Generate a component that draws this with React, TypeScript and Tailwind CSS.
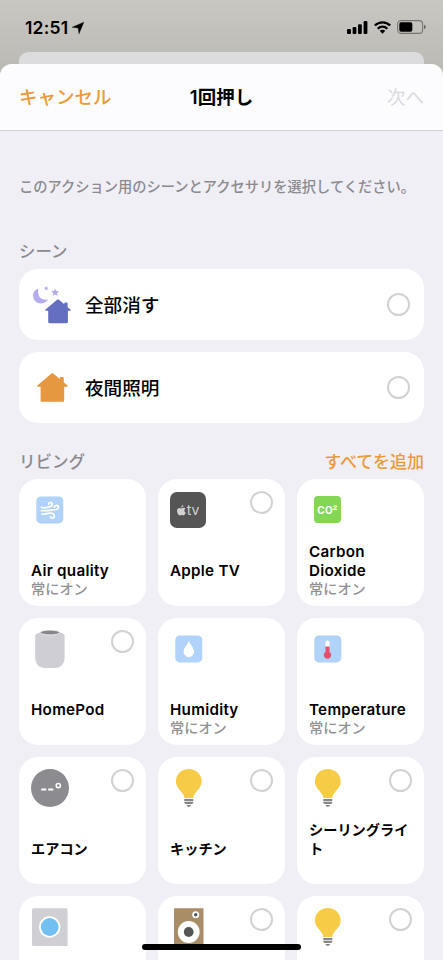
import type { ReactNode } from "react";

interface SceneType {
  name: string;
  icon: ReactNode;
}

interface AccessoryType {
  id: number;
  name: string;
  icon: ReactNode;
  status?: string;
  selectable?: boolean;
  latin?: boolean;
}

const HOUSE_PATH =
  "M14.2.7c.7-.6 1.6-.6 2.3 0l6.4 5.3V4.8c0-.5.4-.8.9-.8h2.1c.5 0 .9.3.9.8v4.7l3.6 2.9c.6.6.4 1.3-.4 1.3h-2.800v13.700c0 .9-.6 1.4-1.4 1.4H5c-.8 0-1.4-.5-1.4-1.4V13.7H.8c-.8 0-1-.7-.4-1.3z";

function NightIcon() {
  return (
    <svg width="40" height="38" viewBox="0 0 40 38" className="block">
      <path
        d="M6.3 2.6C5.1 8.6 8.1 15.1 16.2 13.4C13 18.2 6.3 18.7 2.9 14.7C-.6 10.5.9 4.5 6.3 2.6z"
        fill="#b3adf0"
      />
      <path
        d="M14.2.1l.7 1.4 1.5.2-1.1 1.1.3 1.5-1.4-.7-1.4.7.3-1.5L12 1.7l1.5-.2z"
        fill="#b3adf0"
      />
      <path
        d="M23.1 2.4l1.1 2.7 2.9.2-2.2 1.9.7 2.8-2.5-1.5-2.5 1.5.7-2.8-2.2-1.9 2.9-.2z"
        fill="#b3adf0"
      />
      <path d={HOUSE_PATH} fill="#656fc2" transform="translate(13.2 13.2) scale(.835)" />
    </svg>
  );
}

function HouseIcon() {
  return (
    <svg width="31" height="29" viewBox="0 0 31 29" className="block">
      <path d={HOUSE_PATH} fill="#e69840" />
    </svg>
  );
}

function AirIcon() {
  return (
    <svg width="38" height="38" viewBox="0 0 38 38">
      <rect x="5.3" y="5.4" width="27" height="27" rx="4.5" fill="#b1d2f9" />
      <g fill="none" stroke="#fff" strokeWidth="1.7" strokeLinecap="round">
        <path d="M10.3 16.2c3 1.4 5.500.4 7.500-.2 2.700-.7 3.600-1.400 3.600-2.700 0-2.400-3.500-2.300-3.700-.2" />
        <path d="M10.3 19.500c4.500.8 7.500-.4 11-.6 3.500-.1 6.100-.3 6.100-2.500 0-2.600-3.700-2.500-4.100-.3" />
        <path d="M11 22.900c3.500.6 5.500-.9 8.200-.7 3.200.1 4.100 1.300 4.100 2.900 0 2.800-3.700 2.700-4 .5" />
      </g>
    </svg>
  );
}

function AppleTvIcon() {
  return (
    <div className="mt-px flex h-[36px] w-[36px] items-center justify-center gap-px rounded-[7px] bg-[#555555] text-[#d2d2d2]">
      <svg width="9" height="11" viewBox="0 0 18 22" fill="currentColor">
        <path d="M12.6 0c.2 2.3-1.7 4.8-4 4.9C8.3 2.7 10.4.3 12.6 0z" />
        <path d="M16.7 7.6c-3.1 1.9-2.6 6.3.8 7.6-.8 2.3-2.7 5.8-4.7 5.8-1.3 0-1.8-.8-3.4-.8s-2.2.8-3.4.8C3 21 0 15.8 0 11.7c0-3.8 2.5-5.9 5-5.9 1.7 0 3 1.1 4 1.1s2.6-1.2 4.5-1.2c.7 0 2.2.3 3.2 1.9z" />
      </svg>
      <span className="text-[14px] leading-none">tv</span>
    </div>
  );
}

function Co2Icon() {
  return (
    <div className="ml-[5px] mt-[5px] flex h-[27px] w-[27px] items-center justify-center rounded-[4px] bg-[#83d754] text-[10px] font-bold leading-none tracking-[0.2px] text-white">
      CO²
    </div>
  );
}

function HomePodIcon() {
  return (
    <svg width="38" height="38" viewBox="0 0 38 38">
      <path
        d="M4.2 6c0-2.8 5-4.6 14.8-4.6S33.6 3.2 33.6 6v21.5c0 7-5 10.5-9.6 10.5H13.5c-4.800 0-9.300-3.500-9.300-10.500z"
        fill="#cfced4"
      />
      <ellipse cx="19" cy="2.5" rx="9.7" ry="2.4" fill="#87878b" stroke="#fff" strokeWidth=".7" />
    </svg>
  );
}

function HumidityIcon() {
  return (
    <svg width="38" height="38" viewBox="0 0 38 38">
      <rect x="5.3" y="5.4" width="27" height="27" rx="4.5" fill="#b1d2f9" />
      <path d="M18.8 11c1 2.9 5.2 6.8 5.2 10.7a5.2 5.2 0 0 1-10.4 0c0-3.9 4.2-7.8 5.2-10.7z" fill="#fff" />
    </svg>
  );
}

function TemperatureIcon() {
  return (
    <svg width="38" height="38" viewBox="0 0 38 38">
      <rect x="5.3" y="5.4" width="27" height="27" rx="4.5" fill="#b1d2f9" />
      <path d="M16.5 17v-4.6a2 2 0 0 1 4 0V17z" fill="#fff" />
      <path d="M16.5 16.5h4v5.4a3.7 3.7 0 1 1-4 0z" fill="#e4506b" />
    </svg>
  );
}

function ThermostatIcon() {
  return (
    <svg width="38" height="38" viewBox="0 0 38 38">
      <circle cx="19" cy="19" r="19" fill="#8b8b90" />
      <path d="M10.2 20.4h5.1M17.2 20.4h5.1" stroke="#fff" strokeWidth="2" />
      <circle cx="27.3" cy="16.6" r="2.1" fill="none" stroke="#fff" strokeWidth="1.5" />
    </svg>
  );
}

function BulbIcon() {
  return (
    <svg width="38" height="38" viewBox="0 0 38 38">
      <path
        d="M18.8.1C25.9.1 31.7 5.500 31.700 12.600c0 6.200-6.400 10.200-8 14.200-.3.8-.3 1.700-.5 2.300h-8.800c-.2-.6-.2-1.500-.5-2.300-1.600-4-8-8-8-14.200C5.900 5.500 11.700.1 18.800.1z"
        fill="#f6cb45"
      />
      <path
        d="M14.3 30h9v2.300h-9zM14.300 33h9v.8l-1 1.300h-7l-1-1.300zM16.300 36h5l-1.200 1.500h-.5l-.8.6-.8-.6h-.5z"
        fill="#858585"
      />
    </svg>
  );
}

function CameraIcon() {
  return (
    <svg width="38" height="38" viewBox="0 0 38 38">
      <rect x="1" y=".2" width="35.6" height="37.8" rx="1.5" fill="#d0cfd4" />
      <circle cx="18.7" cy="19" r="10.7" fill="#fff" />
      <circle cx="18.7" cy="19" r="8.9" fill="#72bff4" />
    </svg>
  );
}

function SpeakerIcon() {
  return (
    <svg width="38" height="38" viewBox="0 0 38 38">
      <rect x="4" y=".2" width="29.5" height="38" rx=".5" fill="#a98d66" />
      <circle cx="25.7" cy="6.8" r="3.5" fill="#fff" />
      <circle cx="25.7" cy="6.8" r="1.7" fill="#555" />
      <circle cx="18.7" cy="24" r="10.9" fill="#fff" />
      <circle cx="18.7" cy="24" r="4.9" fill="#555" />
    </svg>
  );
}

const scenes: SceneType[] = [
  { name: "全部消す", icon: <NightIcon /> },
  { name: "夜間照明", icon: <HouseIcon /> },
];

const accessories: AccessoryType[] = [
  { id: 1, name: "Air quality", icon: <AirIcon />, status: "常にオン", latin: true },
  { id: 2, name: "Apple TV", icon: <AppleTvIcon />, selectable: true, latin: true },
  { id: 3, name: "Carbon Dioxide", icon: <Co2Icon />, status: "常にオン", latin: true },
  { id: 4, name: "HomePod", icon: <HomePodIcon />, selectable: true, latin: true },
  { id: 5, name: "Humidity", icon: <HumidityIcon />, status: "常にオン", latin: true },
  { id: 6, name: "Temperature", icon: <TemperatureIcon />, status: "常にオン", latin: true },
  { id: 7, name: "エアコン", icon: <ThermostatIcon />, selectable: true },
  { id: 8, name: "キッチン", icon: <BulbIcon />, selectable: true },
  { id: 9, name: "シーリングライト", icon: <BulbIcon />, selectable: true },
  { id: 10, name: "", icon: <CameraIcon /> },
  { id: 11, name: "", icon: <SpeakerIcon />, selectable: true },
  { id: 12, name: "", icon: <BulbIcon />, selectable: true },
];

function SelectCircle() {
  return <span className="block h-[23px] w-[23px] shrink-0 rounded-full border-2 border-[#d2d2d2]" />;
}

function StatusBar() {
  return (
    <div className="flex h-[52px] shrink-0 items-start justify-between pl-[25px] pr-[17px] pt-[17px]">
      <div className="flex items-center gap-[4px]">
        <span className="text-[17.5px] font-semibold leading-[21px] tracking-[0.2px]">12:51</span>
        <svg width="12" height="12" viewBox="0 0 12 12">
          <path d="M11.8.2L7 11.8 6.2 6 .2 5.2z" stroke="#000" strokeWidth=".4" strokeLinejoin="round" />
        </svg>
      </div>
      <div className="flex items-center gap-[6px] pt-[3px]">
        <svg width="21" height="13" viewBox="0 0 21 13">
          <rect x="0" y="8" width="4" height="5" rx="1" />
          <rect x="5.6" y="6" width="3.8" height="7" rx="1" />
          <rect x="11" y="3.2" width="3.8" height="9.8" rx="1" />
          <rect x="16.6" y="0" width="3.8" height="13" rx="1" />
        </svg>
        <svg width="17" height="13" viewBox="0 0 17 13" fill="none" stroke="#000" strokeWidth="2.2">
          <path d="M.8 4.6c4.3-4.4 11.1-4.400 15.400 0" />
          <path d="M3.7 7.7c2.7-2.8 6.9-2.8 9.600 0" />
          <path d="M8.5 12.7L5.700 9.800c1.600-1.500 4-1.500 5.600 0z" fill="#000" stroke="none" />
        </svg>
        <svg width="29" height="14" viewBox="0 0 29 14">
          <rect x=".6" y=".6" width="25" height="12.8" rx="3.5" fill="none" stroke="#000" strokeOpacity=".4" strokeWidth="1.1" />
          <rect x="2.3" y="2.3" width="13" height="9.4" rx="1.8" />
          <path d="M27 4.800c2.300.6 2.300 3.800 0 4.400z" fillOpacity=".45" />
        </svg>
      </div>
    </div>
  );
}

function SceneRow({ scene }: { scene: SceneType }) {
  return (
    <div className="flex h-[71px] items-center rounded-[19px] bg-white pr-[14px]">
      <div className="flex w-[66px] items-center justify-center">{scene.icon}</div>
      <span className="flex-1 text-[18.6px] font-medium leading-[24px]">{scene.name}</span>
      <SelectCircle />
    </div>
  );
}

function AccessoryTile({ accessory }: { accessory: AccessoryType }) {
  return (
    <div className="flex h-[127px] flex-col rounded-[19px] bg-white p-[12px] pb-[8px]">
      <div className="flex h-[38px] items-start justify-between">
        {accessory.icon}
        {accessory.selectable && <SelectCircle />}
      </div>
      <div
        className={`mt-auto font-semibold leading-[19px] ${
          accessory.latin ? "text-[15.2px] tracking-[0.28px]" : "text-[14.2px]"
        }`}
      >
        {accessory.name}
      </div>
      <div className="h-[18px] text-[14.2px] font-medium leading-[18px] text-[#919195]">{accessory.status}</div>
    </div>
  );
}

function App() {
  return (
    <div
      lang="ja"
      className="relative flex h-[960px] w-[443px] flex-col overflow-hidden bg-linear-to-b from-[#c8c7c2] to-[#bbbab4] to-[7%] font-['Inter','Noto_Sans_CJK_JP',sans-serif] text-black"
    >
      <StatusBar />
      <div className="mx-[19px] h-[12px] shrink-0 rounded-t-[9px] bg-[#dcdcde]" />
      <div className="h-[896px] shrink-0 rounded-t-[12px] bg-[#f0eff5]">
        <div className="grid h-[67px] grid-cols-3 items-center rounded-t-[12px] border-b border-[#d2d1d6] bg-[#fcfcfe] px-[19px] text-[18.5px] leading-[24px]">
          <button className="text-left font-medium text-[#eb9a3a]">キャンセル</button>
          <h1 className="text-center font-semibold">1回押し</h1>
          <button className="text-right text-[#d9d9dc]">次へ</button>
        </div>

        <p className="mt-[46px] whitespace-nowrap px-[19px] text-[14.25px] font-medium leading-[20px] text-[#8a8a8f]">
          このアクション用のシーンとアクセサリを選択してください。
        </p>

        <h2 className="mt-[42px] px-[19px] text-[16.4px] font-medium leading-[24px] text-[#8a8a8f]">シーン</h2>
        <div className="mt-[6px] flex flex-col gap-[12px] px-[19px]">
          {scenes.map((scene) => (
            <SceneRow key={scene.name} scene={scene} />
          ))}
        </div>

        <div className="mt-[27px] flex items-center justify-between px-[19px] text-[16.5px] leading-[24px]">
          <h2 className="font-medium text-[#8a8a8f]">リビング</h2>
          <button className="text-[17px] font-medium text-[#eb9a3a]">すべてを追加</button>
        </div>
        <div className="mt-[5px] grid grid-cols-3 gap-[12px] px-[19px]">
          {accessories.map((accessory) => (
            <AccessoryTile key={accessory.id} accessory={accessory} />
          ))}
        </div>
      </div>

      {/* Home indicator */}
      <div className="absolute bottom-[10px] left-[142px] h-[6px] w-[159px] rounded-full bg-black" />
    </div>
  );
}

export default App;
